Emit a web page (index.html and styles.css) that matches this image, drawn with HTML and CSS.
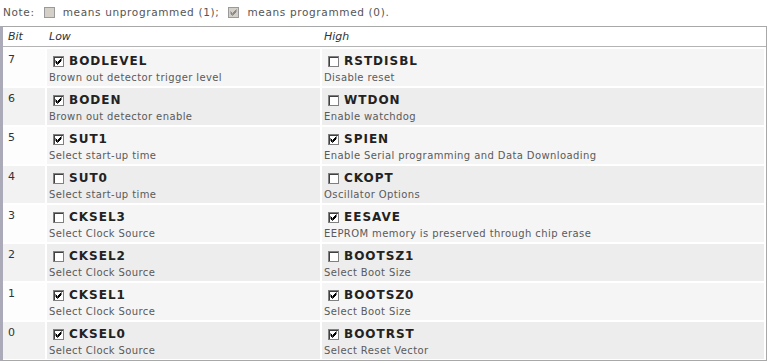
FILE: index.html
```html
<!DOCTYPE html>
<html>
<head>
<meta charset="utf-8">
<link rel="stylesheet" href="styles.css">
</head>
<body>
<div class="note">
  <span>Note:</span>
  <svg class="cb dis" viewBox="0 0 11 11" width="11" height="11"><rect x="0.5" y="0.5" width="10" height="10" fill="#d4d0c8" stroke="#9a9a9a"/></svg>
  <span>means unprogrammed (1);</span>
  <svg class="cb dis" viewBox="0 0 11 11" width="11" height="11"><rect x="0.5" y="0.5" width="10" height="10" fill="#d4d0c8" stroke="#9a9a9a"/><path d="M2.5 4.5 L4.5 6.5 L8.5 2.5 M2.5 5.5 L4.5 7.5 L8.5 3.5 M2.5 6.5 L4.5 8.5 L8.5 4.5" stroke="#8a8a8a" fill="none"/></svg>
  <span>means programmed (0).</span>
</div>
<div class="fuses">
  <div class="head"><span>Bit</span><span>Low</span><span>High</span></div>
  <div id="rows"></div>
</div>
<template id="on"><svg class="cb" viewBox="0 0 11 11" width="11" height="11"><rect x="0.5" y="0.5" width="10" height="10" fill="#fff" stroke="#808080"/><path d="M1 1.5 H10 M1.5 1 V10" stroke="#404040"/><path d="M2.5 4.5 L4.5 6.5 L8.5 2.5 M2.5 5.5 L4.5 7.5 L8.5 3.5 M2.5 6.5 L4.5 8.5 L8.5 4.5" stroke="#000" fill="none"/></svg></template>
<template id="off"><svg class="cb" viewBox="0 0 11 11" width="11" height="11"><rect x="0.5" y="0.5" width="10" height="10" fill="#fff" stroke="#808080"/><path d="M1 1.5 H10 M1.5 1 V10" stroke="#404040"/></svg></template>
<script src="app.js"></script>
</body>
</html>
```
FILE: app.js
```js
const data = [
  [7, ["BODLEVEL", 1, "Brown out detector trigger level"], ["RSTDISBL", 0, "Disable reset"]],
  [6, ["BODEN", 1, "Brown out detector enable"], ["WTDON", 0, "Enable watchdog"]],
  [5, ["SUT1", 1, "Select start-up time"], ["SPIEN", 1, "Enable Serial programming and Data Downloading"]],
  [4, ["SUT0", 0, "Select start-up time"], ["CKOPT", 0, "Oscillator Options"]],
  [3, ["CKSEL3", 0, "Select Clock Source"], ["EESAVE", 1, "EEPROM memory is preserved through chip erase"]],
  [2, ["CKSEL2", 0, "Select Clock Source"], ["BOOTSZ1", 0, "Select Boot Size"]],
  [1, ["CKSEL1", 1, "Select Clock Source"], ["BOOTSZ0", 1, "Select Boot Size"]],
  [0, ["CKSEL0", 1, "Select Clock Source"], ["BOOTRST", 1, "Select Reset Vector"]]
];
const on = document.getElementById('on').innerHTML;
const off = document.getElementById('off').innerHTML;
const rows = document.getElementById('rows');
const cell = (f) => `<div class="cell"><div class="name">${f[1] ? on : off}<b>${f[0]}</b></div><div class="desc">${f[2]}</div></div>`;
rows.innerHTML = data.map((r, i) =>
  `<div class="row ${i % 2 ? 'even' : 'odd'}"><div class="bit">${r[0]}</div>${cell(r[1])}${cell(r[2])}</div>`
).join('');
```
FILE: styles.css
```css
body {
  margin: 0;
  background: #fff;
  font-family: "DejaVu Sans", Verdana, sans-serif;
  color: #333;
}
.note {
  display: flex;
  align-items: center;
  gap: 8px;
  height: 24px;
  padding-left: 3px;
  font-size: 10.5px;
  color: #555;
  letter-spacing: 0.65px;
}
.note .cb { margin-left: 1px; }
.fuses {
  width: 763px;
  border: 1px solid #a8a8a8;
  border-left: 3px solid #aaaab8;
  margin-top: 2px;
}
.head {
  display: grid;
  grid-template-columns: 42px 273px 1fr;
  column-gap: 2px;
  height: 19px;
  align-items: center;
  border-bottom: 1px solid #b4b4b4;
  font-style: italic;
  font-size: 11px;
  color: #333;
}
.head span { padding-left: 2px; }
.head span:first-child { padding-left: 5px; }
.row {
  display: grid;
  grid-template-columns: 42px 273px 1fr;
  column-gap: 2px;
  margin: 2px 2px 0 0;
  height: 37px;
}
.row:last-child { margin-bottom: 1px; }
.bit {
  font-size: 11px;
  padding: 4px 0 0 5px;
  color: #333;
}
.odd .bit { background: #fdfdfd; }
.odd .cell { background: #f5f5f5; }
.even .bit { background: #f2f2f2; }
.even .cell { background: #ededed; }
.cell { padding: 4px 0 0 2px; }
.name {
  display: flex;
  align-items: center;
  gap: 5px;
  height: 16px;
  padding-left: 4px;
}
.name b {
  font-size: 12px;
  color: #222;
  letter-spacing: 1px;
}
.desc {
  font-size: 10px;
  color: #5a5a5a;
  margin-top: 3px;
  letter-spacing: 0.4px;
}
```
